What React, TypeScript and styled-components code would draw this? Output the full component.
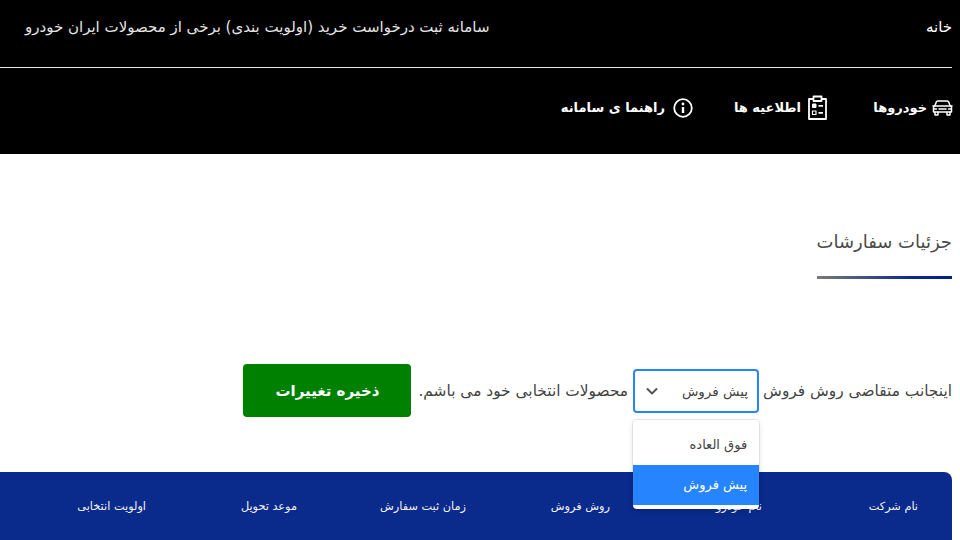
import React from "react"
import styled, { createGlobalStyle } from "styled-components"

const GlobalStyle = createGlobalStyle`
  html, body {
    margin: 0;
    padding: 0;
    background: #fff;
    overflow: hidden;
    font-family: "DejaVu Sans", "Noto Sans", sans-serif;
  }
`

const Page = styled.div`
  width: 960px;
  height: 540px;
  overflow: hidden;
  direction: rtl;
  box-sizing: border-box;
  background: #fff;
`

const Header = styled.header`
  background: #000;
  height: 154px;
  color: #fff;
`

const TopBar = styled.div`
  height: 68px;
  width: 952px;
  margin-right: 8px;
  box-sizing: border-box;
  border-bottom: 1px solid #e6e6e6;
  padding: 16px 0 0 25px;
  display: flex;
  justify-content: space-between;
  align-items: flex-start;
`

const HomeLink = styled.a`
  font-size: 15px;
  line-height: 22px;
  font-weight: 500;
  color: #fff;
`

const SiteTitle = styled.div`
  font-size: 15px;
  line-height: 22px;
  color: #e4e4e4;
`

const Nav = styled.nav`
  display: flex;
  align-items: center;
  height: 79px;
  padding-right: 7px;
`

const NavItem = styled.a<{ $width: number; $gap: number }>`
  display: flex;
  align-items: center;
  gap: ${p => p.$gap}px;
  width: ${p => p.$width}px;
  font-size: 13px;
  font-weight: 700;
  color: #fff;
  white-space: nowrap;
`

const Content = styled.main`
  padding: 0 8px 0 0;
`

const Title = styled.div`
  width: 135px;
  margin-top: 72px;
  font-size: 18px;
  line-height: 32px;
  color: #4a4a4a;
  white-space: nowrap;
`

const TitleRule = styled.div`
  height: 3px;
  margin-top: 18px;
  background: linear-gradient(to right, #7a7a7a, #0a2a8c 70%, #00208a);
`

const OrderRow = styled.div`
  display: flex;
  align-items: center;
  margin-top: 85px;
  height: 53px;
  font-size: 15.4px;
  color: #444;
  white-space: nowrap;
`

const SelectWrap = styled.div`
  position: relative;
  margin: 0 4px 0 5px;
`

const SelectBox = styled.div`
  width: 126px;
  height: 44px;
  box-sizing: border-box;
  border: 2px solid #2684ff;
  border-radius: 4px;
  display: flex;
  align-items: center;
  justify-content: space-between;
  padding: 0 9px 0 10px;
  font-size: 13.5px;
  color: #444;
`

const Menu = styled.div`
  position: absolute;
  top: 51px;
  left: 0;
  width: 126px;
  padding-bottom: 4px;
  background: #fff;
  border-radius: 4px;
  box-shadow: 0 0 0 1px rgba(0, 0, 0, 0.08), 0 2px 6px rgba(0, 0, 0, 0.12);
  z-index: 2;
  overflow: hidden;
`

const MenuOption = styled.div<{ $selected?: boolean }>`
  height: ${p => (p.$selected ? 40 : 45)}px;
  box-sizing: border-box;
  padding-top: ${p => (p.$selected ? 0 : 4)}px;
  display: flex;
  align-items: center;
  padding-right: 12px;
  font-size: 13px;
  color: ${p => (p.$selected ? "#fff" : "#444")};
  background: ${p => (p.$selected ? "#2684ff" : "#fff")};
`

const SaveButton = styled.button`
  width: 168px;
  height: 53px;
  margin-right: 7px;
  border: 0;
  border-radius: 4px;
  background: #008000;
  color: #fff;
  font-family: inherit;
  font-size: 15px;
  font-weight: 700;
`

const OrdersHead = styled.div`
  display: flex;
  align-items: center;
  height: 68px;
  margin-top: 55px;
  padding-right: 34px;
  background: #0a2a8c;
  border-radius: 8px 8px 0 0;
  border-top-left-radius: 0;
  color: #f2f2f2;
  font-size: 11.3px;
  font-weight: 500;
`

const HeadCell = styled.div<{ $width: number }>`
  width: ${p => p.$width}px;
  white-space: nowrap;
`

const CarIcon = () => (
  <svg width="21" height="16" viewBox="0 0 21 16" fill="none" stroke="currentColor" strokeWidth="1.500" strokeLinecap="round" strokeLinejoin="round">
    <path d="M1 6h1.800l1.500-4a1.500 1.500 0 0 1 1.400-1h9.600a1.500 1.500 0 0 1 1.400 1l1.500 4H20" />
    <path d="M2.500 6h16a1 1 0 0 1 1 1v5h-18V7a1 1 0 0 1 1-1z" />
    <path d="M3 12v3h3v-3M15 12v3h3v-3M7 9h7M2 9h2.500M16.500 9H19" />
  </svg>
)

const ClipboardIcon = () => (
  <svg width="19" height="25" viewBox="0 0 19 25" fill="none" stroke="currentColor" strokeWidth="1.800" strokeLinejoin="round">
    <path d="M5.500 4H1v20h17V4h-4.500" />
    <path d="M5.500 6V1.500h8V6z" />
    <rect x="4.500" y="9" width="3.500" height="3.500" fill="currentColor" strokeWidth="1" />
    <rect x="4.500" y="16" width="3.500" height="3.500" strokeWidth="1.200" />
    <path d="M10.500 10.800h4.500M10.500 17.800h4.500" />
  </svg>
)

const InfoIcon = () => (
  <svg width="20" height="20" viewBox="0 0 20 20" fill="none" stroke="currentColor">
    <circle cx="10" cy="10" r="8.800" strokeWidth="1.800" />
    <path d="M10 9v6" strokeWidth="2.400" />
    <circle cx="10" cy="6" r="1.400" fill="currentColor" stroke="none" />
  </svg>
)

const Chevron = () => (
  <svg width="14" height="14" viewBox="0 0 14 14" fill="none" stroke="#555" strokeWidth="2" strokeLinecap="round" strokeLinejoin="round">
    <path d="M2.500 5l4.500 4.500L11.500 5" />
  </svg>
)

const columns: [string, number][] = [
  ["نام شرکت", 156],
  ["نام خودرو", 152],
  ["روش فروش", 144],
  ["زمان ثبت سفارش", 169],
  ["موعد تحویل", 151],
  ["اولویت انتخابی", 120],
]

export default function App() {
  return (
    <Page>
      <GlobalStyle />
      <Header>
        <TopBar>
          <HomeLink>خانه</HomeLink>
          <SiteTitle>سامانه ثبت درخواست خرید (اولویت بندی) برخی از محصولات ایران خودرو</SiteTitle>
        </TopBar>
        <Nav>
          <NavItem $width={126} $gap={5}><CarIcon />خودروها</NavItem>
          <NavItem $width={134} $gap={7}><ClipboardIcon />اطلاعیه ها</NavItem>
          <NavItem $width={140} $gap={8}><InfoIcon />راهنما ی سامانه</NavItem>
        </Nav>
      </Header>
      <Content>
        <Title>
          جزئیات سفارشات
          <TitleRule />
        </Title>
        <OrderRow>
          <span>اینجانب متقاضی روش فروش</span>
          <SelectWrap>
            <SelectBox>
              <span>پیش فروش</span>
              <Chevron />
            </SelectBox>
            <Menu>
              <MenuOption>فوق العاده</MenuOption>
              <MenuOption $selected>پیش فروش</MenuOption>
            </Menu>
          </SelectWrap>
          <span>محصولات انتخابی خود می باشم.</span>
          <SaveButton>ذخیره تغییرات</SaveButton>
        </OrderRow>
        <OrdersHead>
          {columns.map(([label, width]) => (
            <HeadCell key={label} $width={width}>{label}</HeadCell>
          ))}
        </OrdersHead>
      </Content>
    </Page>
  )
}
